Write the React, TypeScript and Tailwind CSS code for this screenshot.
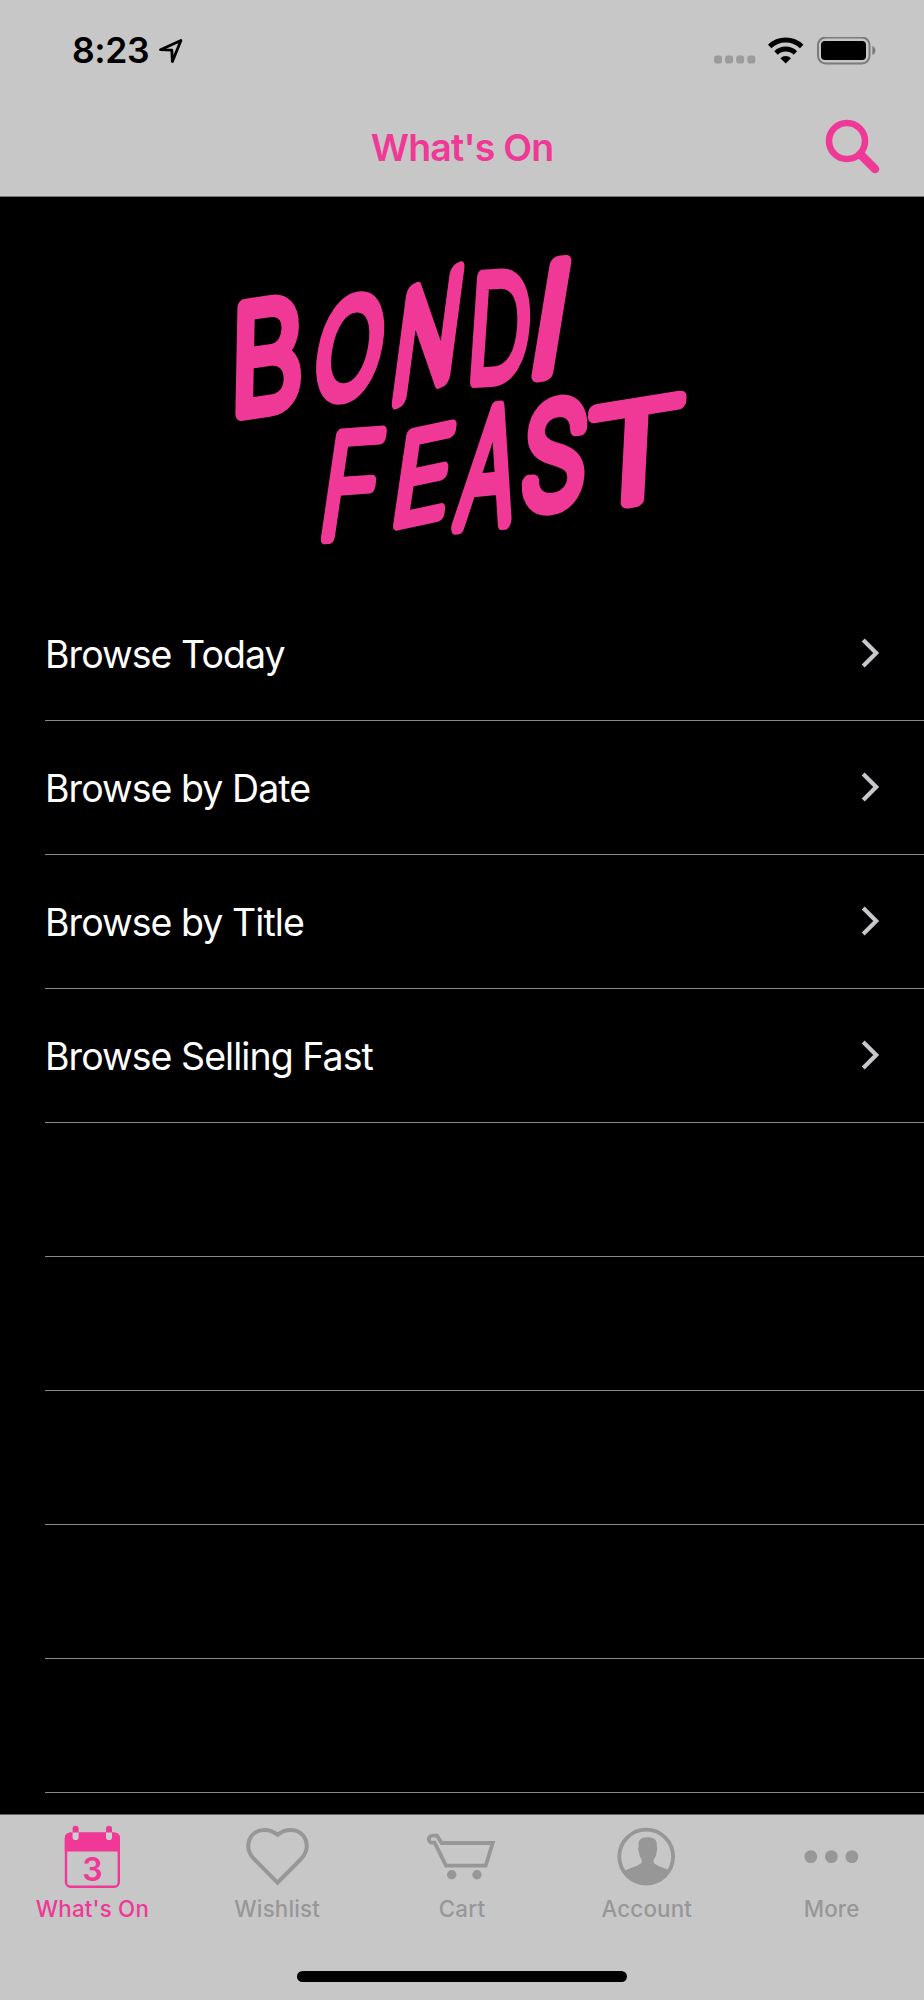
import type { ReactNode } from "react"

type LogoLetter = {
    ch: string
    ink: [number, number]
    at: [number, number]
    up: [number, number]
    across: [number, number]
    weight: number
}

// ink = left edge and width of the glyph at 100px
const logoTop: LogoLetter[] = [
    { ch: "B", ink: [10, 48], at: [21, 173], up: [2, -106], across: [54, -8], weight: 11 },
    { ch: "O", ink: [6, 64], at: [94, 157], up: [17, -95], across: [56, -3], weight: 12 },
    { ch: "N", ink: [10, 54], at: [177, 160], up: [14, -106], across: [46, -22], weight: 13 },
    { ch: "D", ink: [10, 55], at: [254, 141], up: [7, -104], across: [48, -3], weight: 10 },
    { ch: "I", ink: [11, 5], at: [320, 134], up: [18, -110], across: [7, -1], weight: 11 },
]

const logoBottom: LogoLetter[] = [
    { ch: "F", ink: [10, 42], at: [105, 298], up: [15, -103], across: [43, -3], weight: 9 },
    { ch: "E", ink: [10, 43], at: [178, 284], up: [13, -89], across: [42, -9], weight: 11 },
    { ch: "A", ink: [4, 60], at: [237, 286], up: [16, -114], across: [51, -5], weight: 11 },
    { ch: "S", ink: [6, 52], at: [305, 268], up: [8, -101], across: [54, -5], weight: 12 },
    { ch: "T", ink: [5, 54], at: [370, 268], up: [5, -97], across: [87, -14], weight: 10 },
]

const CAP = 72.7

const letterMatrix = ({ ink, at, up, across }: LogoLetter) => {
    const a = across[0] / ink[1]
    const b = across[1] / ink[1]
    return `matrix(${a} ${b} ${-up[0] / CAP} ${-up[1] / CAP} ${at[0] - a * ink[0]} ${at[1] - b * ink[0]})`
}

const Logo = () => {
    return (
        <svg width="480" height="380" viewBox="0 -40 480 380" fill="#f03996" stroke="#f03996" strokeLinejoin="round" className="overflow-visible font-['Inter',sans-serif] font-extralight">
            {[...logoTop, ...logoBottom].map((letter, index) => (
                <text key={index} fontSize="100" strokeWidth={letter.weight} transform={letterMatrix(letter)}>
                    {letter.ch}
                </text>
            ))}
        </svg>
    )
}

const StatusBar = () => {
    return (
        <div className="flex h-[98px] items-center pt-[3px] pl-[72px] pr-[46px]">
            <div className="text-[35.5px] font-semibold leading-none tracking-[-0.4px] text-black w-[86px] pt-px">8:23</div>
            <svg width="26" height="26" viewBox="0 0.5 26 26" fill="none" stroke="#000" strokeWidth="2.8" strokeLinejoin="round">
                <path d="M2.5 12.2 22.9 3 14.4 24 13.8 12.7Z" />
            </svg>
            <div className="ml-auto flex items-center">
                <svg width="43" height="28" viewBox="0 1 43 28" fill="#9b9b9b">
                    <rect x="0" y="19.5" width="8" height="8" rx="2.8" />
                    <rect x="11.1" y="19.5" width="8" height="8" rx="2.8" />
                    <rect x="22.2" y="19.5" width="8" height="8" rx="2.8" />
                    <rect x="33.3" y="19.5" width="8" height="8" rx="2.8" />
                </svg>
                <svg width="38" height="28" viewBox="0 0.5 38 28" fill="none" stroke="#000" strokeWidth="5" className="ml-[10px]">
                    <path d="M2.7 10A23 23 0 0 1 34.7 10" />
                    <path d="M9 16.5A14 14 0 0 1 28.4 16.5" />
                    <path d="M18.7 27 13.4 21.7A7.6 7.6 0 0 1 24 21.7Z" fill="#000" stroke="none" />
                </svg>
                <svg width="61" height="28" viewBox="0 0.5 61 28" className="ml-[12px]">
                    <rect x="1" y="1" width="51.5" height="26" rx="7.5" fill="none" stroke="#7b7b7b" strokeWidth="2" />
                    <rect x="4" y="4.5" width="45" height="19" rx="4" fill="#000" />
                    <path d="M55.3 9.5C59.4 11 59.4 17 55.3 18.5Z" fill="#7b7b7b" />
                </svg>
            </div>
        </div>
    )
}

const NavBar = () => {
    return (
        <div className="grid h-[98px] grid-cols-[1fr_auto_1fr] items-center">
            <div></div>
            <h1 className="pt-[2px] text-[37.5px] font-semibold leading-none tracking-[-0.8px] text-[#f03996]">What's On</h1>
            <svg width="56" height="56" viewBox="0 0 56 56" fill="none" stroke="#f03996" className="mr-[43px] justify-self-end">
                <circle cx="22" cy="22" r="18" strokeWidth="6.6" />
                <path d="M35.5 35.5 50 50" strokeWidth="8.6" strokeLinecap="round" />
            </svg>
        </div>
    )
}

const rows = ["Browse Today", "Browse by Date", "Browse by Title", "Browse Selling Fast", "", "", "", "", ""]

const Row = ({ label }: { label: string }) => {
    return (
        <li className="ml-[45px] flex h-[134px] items-center justify-between border-b border-[#8a8a8c] pr-[43px]">
            <span className="pt-[2px] text-[37.5px] leading-none tracking-[-0.95px] text-white">{label}</span>
            {label && (
                <svg width="20" height="32" viewBox="0 0 20 32" fill="none" stroke="#c7c7cc" strokeWidth="4.2">
                    <path d="M2.2 2 15.2 15 2.2 28" />
                </svg>
            )}
        </li>
    )
}

const CalendarIcon = () => (
    <>
        <rect x="10" y="13.6" width="52.8" height="53.2" rx="4.5" fill="none" stroke="currentColor" strokeWidth="2.4" />
        <path d="M8.8 31.6V18a5.5 5.5 0 0 1 5.5-5.5H58.5a5.5 5.5 0 0 1 5.5 5.5V31.6Z" fill="currentColor" />
        <rect x="16.6" y="6" width="6" height="14" rx="2.8" fill="#cfcfcf" />
        <rect x="50" y="6" width="6" height="14" rx="2.8" fill="#cfcfcf" />
        <path d="M16.6 12.4V8.5a3 2.8 0 0 1 6 0V12.4ZM50 12.4V8.5a3 2.8 0 0 1 6 0V12.4Z" fill="currentColor" />
        <text x="36.4" y="60.8" textAnchor="middle" fontSize="32" fontWeight="600" fill="currentColor">3</text>
    </>
)

const HeartIcon = () => (
    <path
        d="M36.5 62.6 13 39C2 27 8 10 23.5 10C29 10 33 12 36.5 14.7C40 12 44 10 49.5 10C65 10 71 27 60 39Z"
        fill="none"
        stroke="currentColor"
        strokeWidth="4"
    />
)

const CartIcon = () => (
    <>
        <path
            d="M6.3 15.7H11L15.7 23H66.7L59.7 45.7H20L8.6 22.7H6.3A3.5 3.5 0 0 1 6.3 15.7Z"
            fill="none"
            stroke="currentColor"
            strokeWidth="3.8"
        />
        <circle cx="25.7" cy="54.7" r="4.7" fill="currentColor" />
        <circle cx="51" cy="54.7" r="4.7" fill="currentColor" />
    </>
)

const AccountIcon = () => (
    <>
        <circle cx="35.2" cy="36.6" r="26.9" fill="none" stroke="currentColor" strokeWidth="3.8" />
        <path
            d="M14 50.7C20 47.5 28 46 30.7 42.5V39.5C28.5 37 28.3 34 28 32C26.8 30 27 28 27.8 26.5C26.5 20 30 17 37 17.2C44 17.3 46.7 21 45.7 26.5C46.5 28 46.5 30.5 45.5 32C45.3 35 44.5 37.5 42.6 39.5V42.5C45 46 53 47.5 57.2 50C53 59 45 64.5 35.2 64.5C26 64.5 18 59 14 50.7Z"
            fill="currentColor"
        />
    </>
)

const MoreIcon = () => (
    <g fill="currentColor">
        <circle cx="14.8" cy="36.6" r="6.4" />
        <circle cx="35.4" cy="36.6" r="6.4" />
        <circle cx="55.9" cy="36.6" r="6.4" />
    </g>
)

const Tab = ({ label, active, children }: { label: string; active?: boolean; children: ReactNode }) => {
    return (
        <div className={active ? "flex flex-1 flex-col items-center text-[#f03996]" : "flex flex-1 flex-col items-center text-[#979797]"}>
            <svg width="72" height="72" viewBox="0 0 72 72">{children}</svg>
            <span className="mt-[6px] text-[22.3px] font-medium leading-[22px] tracking-[0.2px]">{label}</span>
        </div>
    )
}

const TabBar = () => {
    return (
        <div className="flex h-[186px] flex-col justify-between border-t border-[#5f5f5f] bg-[#c7c7c7] pt-[5px] pb-[18px]">
            <div className="flex">
                <Tab label="What's On" active><CalendarIcon /></Tab>
                <Tab label="Wishlist"><HeartIcon /></Tab>
                <Tab label="Cart"><CartIcon /></Tab>
                <Tab label="Account"><AccountIcon /></Tab>
                <Tab label="More"><MoreIcon /></Tab>
            </div>
            <div className="mx-auto h-[11px] w-[330px] rounded-full bg-black"></div>
        </div>
    )
}

const App = () => {
    return (
        <div className="flex h-[2000px] w-[924px] flex-col overflow-hidden bg-black font-['Inter',sans-serif]">
            <header className="h-[197px] border-b border-[#7a7a7a] bg-[#c7c7c7]">
                <StatusBar />
                <NavBar />
            </header>
            <main className="flex-1 overflow-hidden">
                <div className="flex h-[390px] justify-center pt-[3px] pr-[4px]">
                    <Logo />
                </div>
                <ul>
                    {rows.map((label, index) => (
                        <Row key={index} label={label} />
                    ))}
                </ul>
            </main>
            <TabBar />
        </div>
    )
}

export default App
